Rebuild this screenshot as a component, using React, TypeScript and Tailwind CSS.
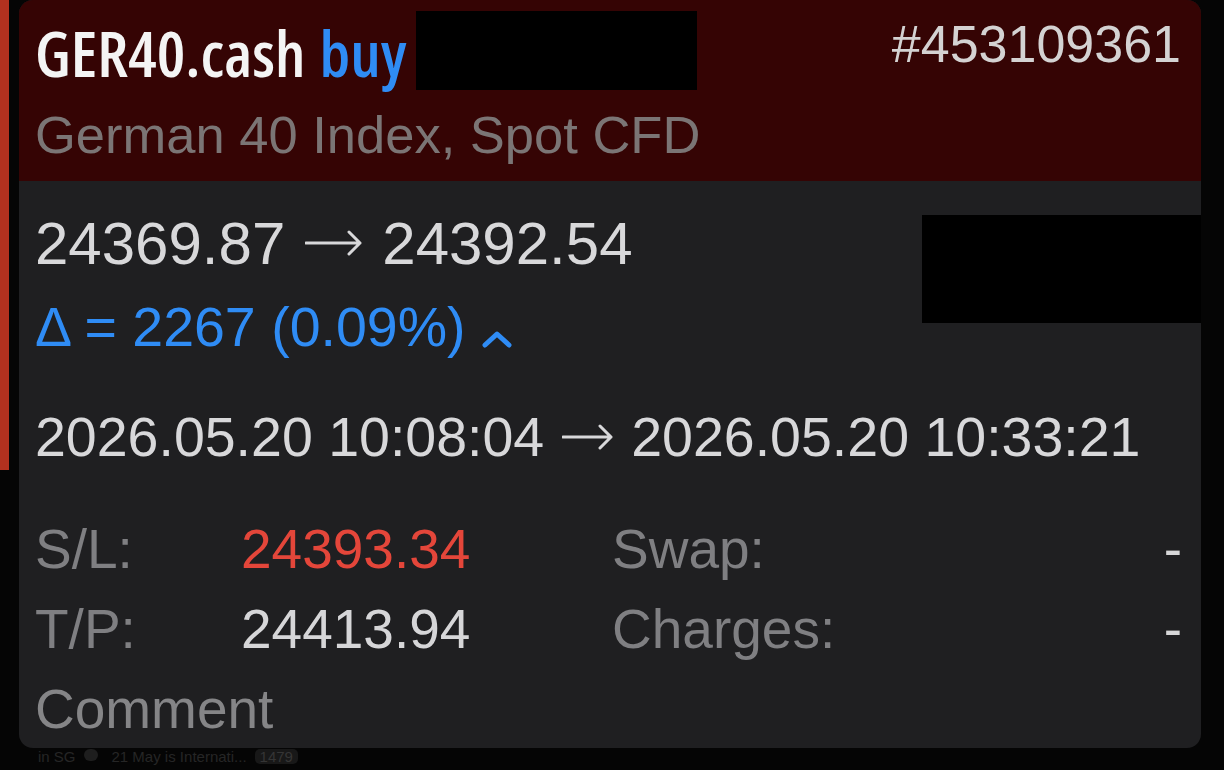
import { useMemo } from 'react';

const sans = { fontFamily: '"Liberation Sans", Arial, sans-serif' };

const Caret = () => (
  <svg width="30" height="18" viewBox="0 0 30 18" className="ml-[17px] mt-[30px]">
    <polyline points="3,15 15,4 27,15" fill="none" stroke="#2f8cf5" strokeWidth="5" strokeLinecap="round" strokeLinejoin="round" />
  </svg>
);

// thin long arrow, the font's own glyph is too small
const Arrow = ({ w, className }: { w: number; className: string }) => (
  <svg width={w} height="26" viewBox={`0 0 ${w} 26`} className={className}>
    <path d={`M1 13 H${w - 2} M${w - 13} 2 L${w - 2} 13 L${w - 13} 24`} fill="none" stroke="#d8d8da" strokeWidth="3" strokeLinecap="round" strokeLinejoin="round" />
  </svg>
);

const Redacted = ({ className }: { className: string }) => <div className={`bg-black ${className}`} />;

export default function App() {
  const rows = useMemo(
    () => [
      { label: 'S/L:', value: '24393.34', valueColor: 'text-[#e4463a]', side: 'Swap:', sideValue: '-' },
      { label: 'T/P:', value: '24413.94', valueColor: 'text-[#d6d6d8]', side: 'Charges:', sideValue: '-' },
    ],
    []
  );

  return (
    <div className="w-[1224px] h-[770px] bg-[#050505] overflow-hidden flex flex-col" style={sans}>
      <div className="flex h-[748px]">
        {/* left accent */}
        <div className="w-[9px] h-[470px] bg-[#b3311f]" />

        {/* order card */}
        <div className="ml-[10px] w-[1182px] h-[748px] rounded-[14px] overflow-hidden bg-[#1f1f21] flex flex-col">
          {/* header */}
          <div className="h-[181px] shrink-0 bg-[#350404] pl-[16px] pr-[20px] pt-[18px] flex justify-between items-start">
            <div className="flex flex-col">
              <div className="flex items-start mt-[2px]">
                <span
                  className="text-[64px] leading-[65px] h-[65px] font-semibold text-[#f4f4f4] whitespace-nowrap"
                  style={{ fontFamily: '"Open Sans", sans-serif', fontStretch: '75%' }}
                >
                  GER40.cash<span className="ml-[14px] text-[#2f8cf5]">buy</span>
                </span>
                <Redacted className="w-[281px] h-[79px] ml-[9px] -mt-[9px]" />
              </div>
              <div className="mt-[19px] text-[52.5px] leading-none text-[#7b7575] whitespace-nowrap">
                German 40 Index, Spot CFD
              </div>
            </div>
            <div className="text-[52px] leading-none text-[#d4d2d2]">#453109361</div>
          </div>

          {/* body */}
          <div className="flex-1 pl-[16px] pr-[19px] pt-[33px]">
            <div className="flex justify-between items-start -mr-[19px]">
              <div className="flex flex-col">
                <div className="flex items-start text-[60px] leading-none text-[#d8d8da] whitespace-nowrap">
                  <span>24369.87</span>
                  <Arrow w={57} className="mx-[20px] mt-[16px]" />
                  <span>24392.54</span>
                </div>
                <div className="mt-[26px] flex items-start text-[55.5px] leading-none text-[#2f8cf5] whitespace-nowrap">
                  <span>Δ = 2267 (0.09%)</span>
                  <Caret />
                </div>
              </div>
              <Redacted className="w-[279px] h-[108px] mt-[1px]" />
            </div>

            <div className="mt-[54px] flex items-start text-[55.5px] leading-none text-[#d8d8da] whitespace-nowrap">
              <span>2026.05.20 10:08:04</span>
              <Arrow w={51} className="mx-[18px] mt-[14px]" />
              <span>2026.05.20 10:33:21</span>
            </div>

            <div className="mt-[57px] grid grid-cols-[206px_371px_1fr_auto] gap-y-[25px] text-[55px] leading-none">
              {rows.map((r) => (
                <div key={r.label} className="contents">
                  <div className="text-[#7f7f82]">{r.label}</div>
                  <div className={r.valueColor}>{r.value}</div>
                  <div className="text-[#7f7f82]">{r.side}</div>
                  <div className="text-[#d6d6d8]">{r.sideValue}</div>
                </div>
              ))}
            </div>

            <div className="mt-[25px] text-[55px] leading-none text-[#858587]">Comment</div>
          </div>
        </div>
      </div>

      {/* feed peeking out below */}
      <div className="h-[22px] flex items-start pl-[38px] pt-[1px] gap-[8px] text-[15px] leading-[15px] text-[#262626] whitespace-nowrap">
        <span>in SG</span>
        <span className="w-[14px] h-[12px] rounded-full bg-[#1e1e1e]" />
        <span className="ml-[6px]">21 May is Internati...</span>
        <span className="px-[5px] rounded-[5px] bg-[#181818] text-[#353535]">1479</span>
      </div>
    </div>
  );
}
